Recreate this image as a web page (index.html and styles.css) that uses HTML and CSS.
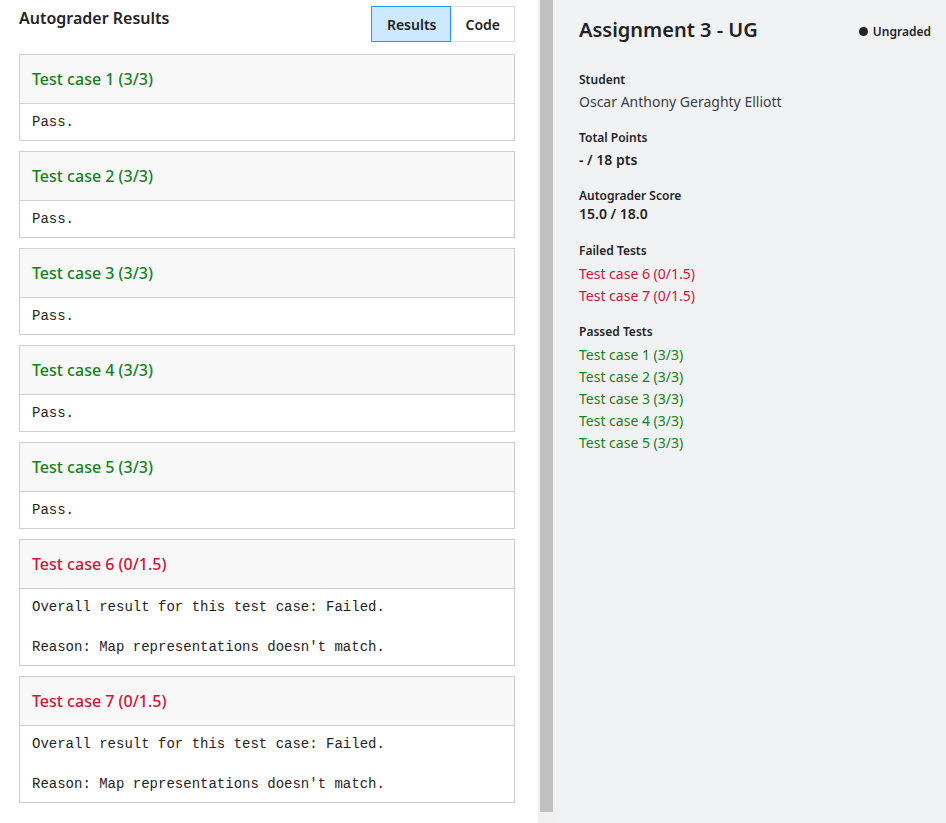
FILE: index.html
```html
<!DOCTYPE html>
<html>
<head>
<meta charset="utf-8">
<link rel="stylesheet" href="styles.css">
</head>
<body>
<div class="layout">
  <main class="results">
    <div class="results-head">
      <h1 class="results-title">Autograder Results</h1>
      <div class="tabs">
        <button class="tab tab-active">Results</button>
        <button class="tab">Code</button>
      </div>
    </div>
    <section class="case">
      <div class="case-head pass">Test case 1 (3/3)</div>
      <pre class="case-body">Pass.</pre>
    </section>
    <section class="case">
      <div class="case-head pass">Test case 2 (3/3)</div>
      <pre class="case-body">Pass.</pre>
    </section>
    <section class="case">
      <div class="case-head pass">Test case 3 (3/3)</div>
      <pre class="case-body">Pass.</pre>
    </section>
    <section class="case">
      <div class="case-head pass">Test case 4 (3/3)</div>
      <pre class="case-body">Pass.</pre>
    </section>
    <section class="case">
      <div class="case-head pass">Test case 5 (3/3)</div>
      <pre class="case-body">Pass.</pre>
    </section>
    <section class="case">
      <div class="case-head fail">Test case 6 (0/1.5)</div>
      <pre class="case-body">Overall result for this test case: Failed.

Reason: Map representations doesn't match.</pre>
    </section>
    <section class="case">
      <div class="case-head fail">Test case 7 (0/1.5)</div>
      <pre class="case-body">Overall result for this test case: Failed.

Reason: Map representations doesn't match.</pre>
    </section>
  </main>
  <div class="scrollbar"><div class="scroll-thumb"></div></div>
  <aside class="summary">
    <div class="summary-head">
      <h2 class="summary-title">Assignment 3 - UG</h2>
      <span class="status"><span class="status-dot"></span>Ungraded</span>
    </div>
    <div class="field field-student">
      <div class="label">Student</div>
      <div class="value">Oscar Anthony Geraghty Elliott</div>
    </div>
    <div class="field">
      <div class="label">Total Points</div>
      <div class="value strong">- / 18 pts</div>
    </div>
    <div class="field">
      <div class="label">Autograder Score</div>
      <div class="value strong tight">15.0 / 18.0</div>
    </div>
    <div class="field field-failed">
      <div class="label">Failed Tests</div>
      <ul class="tests">
        <li class="fail">Test case 6 (0/1.5)</li>
        <li class="fail">Test case 7 (0/1.5)</li>
      </ul>
    </div>
    <div class="field field-list">
      <div class="label">Passed Tests</div>
      <ul class="tests">
        <li class="pass">Test case 1 (3/3)</li>
        <li class="pass">Test case 2 (3/3)</li>
        <li class="pass">Test case 3 (3/3)</li>
        <li class="pass">Test case 4 (3/3)</li>
        <li class="pass">Test case 5 (3/3)</li>
      </ul>
    </div>
  </aside>
</div>
</body>
</html>
```

FILE: styles.css
```css
* { box-sizing: border-box; }
html, body { margin: 0; padding: 0; height: 100%; }
body {
  font-family: "Noto Sans", "Open Sans", sans-serif;
  color: #1f2327;
  background: #fff;
}
.layout {
  display: flex;
  height: 823px;
  overflow: hidden;
}
.results {
  width: 538px;
  flex: none;
  padding: 6px 23px 0 19px;
  background: #fff;
}
.results-head {
  display: flex;
  justify-content: space-between;
  align-items: flex-start;
  margin-bottom: 12px;
}
.results-title {
  margin: 0;
  font-size: 16px;
  line-height: 24px;
  font-weight: 600;
  color: #1f2327;
}
.tabs { display: flex; }
.tab {
  font-family: "Noto Sans", sans-serif;
  font-size: 14px;
  font-weight: 600;
  color: #1f2327;
  height: 36px;
  padding: 0 14px;
  background: #fff;
  border: 1px solid #d9d9d9;
  margin: 0;
}
.tab + .tab { border-left: none; }
.tab-active {
  background: #cce9ff;
  border-color: #2196f3;
  padding: 0 14px 0 15px;
}
.case {
  border: 1px solid #cfcfcf;
  margin-bottom: 10px;
}
.case-head {
  background: #f8f8f8;
  border-bottom: 1px solid #cfcfcf;
  padding: 12px 12px;
  font-size: 16px;
  line-height: 24px;
  font-weight: 500;
}
.pass { color: #17801e; }
.fail { color: #d2143a; }
.case-body {
  margin: 0;
  padding: 8px 12px;
  font-family: "Liberation Mono", "Courier New", monospace;
  font-size: 14px;
  line-height: 20px;
  color: #1f2327;
  white-space: pre;
}
.scrollbar {
  width: 17px;
  flex: none;
  background: #f0f0f0;
  padding-left: 2px;
  padding-right: 2px;
}
.scroll-thumb {
  height: 812px;
  background: #c1c1c1;
}
.summary {
  flex: 1;
  background: #f1f2f4;
  padding: 16px 15px 0 24px;
}
.summary-head {
  display: flex;
  justify-content: space-between;
  align-items: center;
}
.summary-title {
  margin: 0;
  font-size: 20px;
  line-height: 28px;
  font-weight: 600;
  color: #1f2327;
}
.status {
  display: flex;
  align-items: center;
  font-size: 12px;
  font-weight: 600;
  color: #1f2327;
  margin-top: 2px;
}
.status-dot {
  width: 9px;
  height: 9px;
  border-radius: 50%;
  background: #222;
  margin-right: 5px;
}
.field { margin-top: 16px; }
.field-student { margin-top: 27px; }
.field-failed { margin-top: 19px; }
.field-list { margin-top: 16px; }
.label {
  font-size: 12px;
  line-height: 18px;
  font-weight: 600;
  color: #1f2327;
  margin-bottom: 2px;
}
.value {
  font-size: 14px;
  line-height: 22px;
  color: #3a3f44;
}
.value.strong { font-weight: 600; color: #1f2327; }
.value.tight { line-height: 18px; margin-top: -2px; }
.tests {
  list-style: none;
  margin: 3px 0 0;
  padding: 0;
}
.tests li {
  font-size: 14px;
  line-height: 22px;
}
.tests li.pass { color: #1a801a; }
.tests li.fail { color: #d2143a; }
```
